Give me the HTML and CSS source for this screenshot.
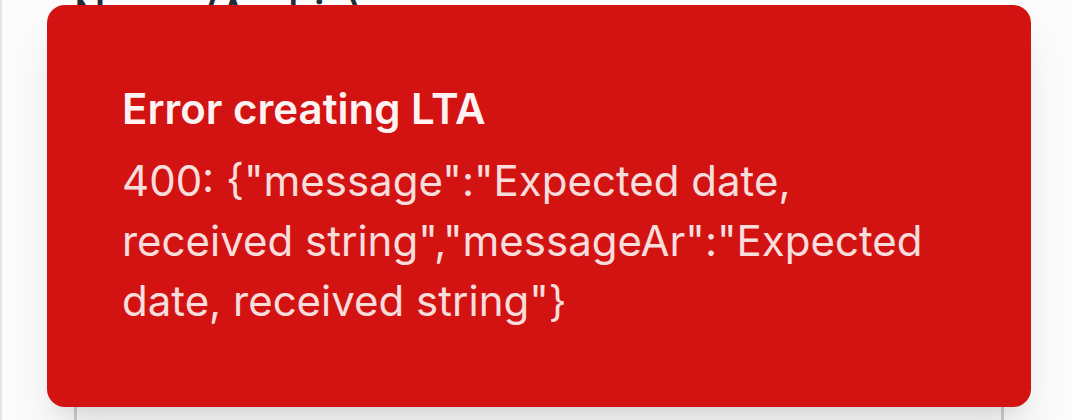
FILE: index.html
```html
<!DOCTYPE html>
<html lang="en">
<head>
<meta charset="utf-8">
<meta name="viewport" content="width=device-width, initial-scale=1">
<title>Error creating LTA</title>
<link rel="stylesheet" href="styles.css">
</head>
<body>
<main class="panel">
  <form class="field">
    <label class="field-label" for="name-ar">Name (Arabic)</label>
    <textarea class="field-input" id="name-ar"></textarea>
  </form>
</main>
<section class="toast" role="alert">
  <h2 class="toast-title">Error creating LTA</h2>
  <p class="toast-text">400: {"message":"Expected date, received string","messageAr":"Expected date, received string"}</p>
</section>
</body>
</html>
```
FILE: styles.css
```css
* {
  box-sizing: border-box;
}

body {
  margin: 0;
  height: 100vh;
  overflow: hidden;
  background: #fbfbfb;
  color: #242b38;
  font-family: Inter, "Liberation Sans", sans-serif;
}

.panel {
  display: flex;
  height: 100%;
  overflow: hidden;
  border-left: 2px solid #e4e4eb;
  padding: 0 68px 0 72px;
}

.field {
  flex: 1;
  display: flex;
  flex-direction: column;
  gap: 24px;
  margin: -5px 0;
}

.field-label {
  font-size: 42px;
  line-height: 42px;
  font-weight: 500;
}

.field-input {
  flex: 1;
  border: 3px solid #cbd0d9;
  border-bottom: 0;
  background: #fbfbfb;
  resize: none;
}

.toast {
  position: absolute;
  inset: 5px 41px auto 47px;
  padding: 74px 75px 76px;
  border-radius: 18px;
  background: #d21311;
  color: #fef2f2;
  box-shadow: 0 30px 45px -9px rgba(0, 0, 0, 0.11), 0 12px 18px -12px rgba(0, 0, 0, 0.11);
}

.toast-title {
  margin: 0 0 12px;
  font-size: 42px;
  line-height: 60px;
  font-weight: 600;
}

.toast-text {
  margin: 0;
  font-size: 42px;
  line-height: 60px;
  opacity: 0.9;
}
```
